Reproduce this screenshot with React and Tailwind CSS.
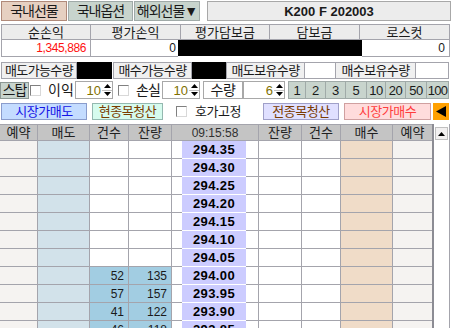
import React from "react";

const LINE = "border-[#a4a4ac]";

function Check({ className = "" }) {
  return (
    <div
      className={`w-[11px] h-[11px] shrink-0 bg-white border border-t-[#808080] border-l-[#808080] border-r-[#d8d8d8] border-b-[#d8d8d8] ${className}`}
    />
  );
}

function Spinner({ className, value }) {
  return (
    <div className={`flex h-[18px] bg-white border border-[#a8a8a8] ${className}`}>
      <div className="flex-1 flex items-center justify-end pr-[1px] text-[13px] leading-none text-[#807000]">
        {value}
      </div>
      <div className="w-[10px] flex flex-col">
        <div className="flex-1 flex items-center justify-center border-b border-[#c0c0c0]">
          <svg width="7" height="4" viewBox="0 0 7 4">
            <polygon points="3.5,0 7,4 0,4" fill="#000" />
          </svg>
        </div>
        <div className="flex-1 flex items-center justify-center">
          <svg width="7" height="4" viewBox="0 0 7 4">
            <polygon points="0,0 7,0 3.5,4" fill="#000" />
          </svg>
        </div>
      </div>
    </div>
  );
}

const prices = [
  "294.35",
  "294.30",
  "294.25",
  "294.20",
  "294.15",
  "294.10",
  "294.05",
  "294.00",
  "293.95",
  "293.90",
  "293.85",
];
const sellQty = {
  7: ["52", "135"],
  8: ["57", "157"],
  9: ["41", "122"],
  10: ["46", "118"],
};

export default function App() {
  return (
    <div className="w-[452px] h-[328px] overflow-hidden bg-white text-[#1a1a1a] font-['Liberation_Sans','Noto_Sans_CJK_KR',sans-serif] leading-none">
      {/* Row 1: tabs */}
      <div className="flex h-[21px] pt-[1px] pl-[1px]">
        <div className="w-[66px] h-[20px] flex items-center justify-center bg-[#e6d0c1] border border-[#b08a7a] text-[14px] tracking-[-1px]">
          국내선물
        </div>
        <div className="ml-[1px] w-[65px] h-[20px] flex items-center justify-center bg-[#c8d4cd] border border-[#a0aaa8] text-[14px] tracking-[-1px]">
          국내옵션
        </div>
        <div className="ml-[1px] w-[66px] h-[20px] flex items-center justify-center bg-[#c8d4cd] border border-[#a0aaa8] text-[14px] tracking-[-1px]">
          해외선물▼
        </div>
        <div className="ml-[7px] w-[244px] h-[20px] flex items-center justify-center bg-[#ececec] border border-[#a8a8a8] text-[13px] font-bold">
          K200 F 202003
        </div>
      </div>

      {/* Row 2: summary table */}
      <div className="mt-[3px] ml-[1px] w-[449px]">
        <div className={`flex h-[16px] border-t border-l ${LINE} bg-[#ececec] text-[13px]`}>
          <div className={`w-[89px] border-r border-b ${LINE} flex items-center justify-center`}>순손익</div>
          <div className={`w-[90px] border-r border-b ${LINE} flex items-center justify-center`}>평가손익</div>
          <div className={`w-[89px] border-r border-b ${LINE} flex items-center justify-center`}>평가담보금</div>
          <div className={`w-[90px] border-r border-b ${LINE} flex items-center justify-center`}>담보금</div>
          <div className={`w-[90px] border-r border-b ${LINE} flex items-center justify-center`}>로스컷</div>
        </div>
        <div className={`flex h-[17px] border-l ${LINE} text-[12px]`}>
          <div className={`w-[89px] border-r border-b ${LINE} flex items-center justify-end pr-[4px] text-[#ff1010] tracking-[-0.4px]`}>
            1,345,886
          </div>
          <div className={`w-[87px] border-b ${LINE} flex items-center justify-end pr-[2px]`}>0</div>
          <div className="w-[184px] bg-black mb-[1px]" />
          <div className={`w-[88px] border-r border-b ${LINE} flex items-center justify-end pr-[4px]`}>0</div>
        </div>
      </div>

      {/* Row 3: quantities */}
      <div className="mt-[5px] ml-[1px] flex h-[17px] text-[13px] tracking-[-0.6px]">
        <div className={`w-[76px] bg-[#f0f0f0] border ${LINE} flex items-center justify-center`}>매도가능수량</div>
        <div className="w-[35px] bg-black" />
        <div className={`ml-[1px] w-[79px] bg-[#f0f0f0] border ${LINE} flex items-center justify-center`}>매수가능수량</div>
        <div className="w-[34px] bg-black" />
        <div className={`w-[79px] bg-[#f0f0f0] border ${LINE} flex items-center justify-center`}>매도보유수량</div>
        <div className={`w-[31px] bg-white border-t border-b border-r ${LINE}`} />
        <div className={`w-[80px] bg-[#f0f0f0] border-t border-b border-r ${LINE} flex items-center justify-center`}>매수보유수량</div>
        <div className={`w-[33px] bg-white border-t border-b border-r ${LINE}`} />
      </div>

      {/* Row 4: stop controls */}
      <div className="mt-[2px] flex h-[18px] items-center text-[13px]">
        <div className="w-[29px] h-[17px] bg-[#c8d4cd] border border-[#8c9894] flex items-center justify-center text-[14px] tracking-[-1px]">스탑</div>
        <Check className="ml-[1px]" />
        <div className="ml-[7px] w-[27px] text-[14px]">이익</div>
        <Spinner className="w-[38px]" value="10" />
        <Check className="ml-[5px]" />
        <div className="ml-[7px] w-[26px] text-[14px] tracking-[-1px]">손실</div>
        <Spinner className="w-[38px]" value="10" />
        <div className="ml-[3px] w-[40px] h-[18px] bg-white border border-[#a8a8a8] flex items-center justify-center text-[14px] tracking-[-0.5px]">수량</div>
        <Spinner className="w-[42px]" value="6" />
        <div className="ml-[3px] flex h-[18px] text-[13px]">
          <div className="w-[18px] bg-[#c8d4cd] border border-[#a0aaa8] flex items-center justify-center">1</div>
          <div className="w-[20px] bg-[#c8d4cd] border border-l-0 border-[#a0aaa8] flex items-center justify-center">2</div>
          <div className="w-[20px] bg-[#c8d4cd] border border-l-0 border-[#a0aaa8] flex items-center justify-center">3</div>
          <div className="w-[21px] bg-[#c8d4cd] border border-l-0 border-[#a0aaa8] flex items-center justify-center">5</div>
          <div className="w-[19px] bg-[#c8d4cd] border border-l-0 border-[#a0aaa8] flex items-center justify-center tracking-[-0.5px]">10</div>
          <div className="w-[20px] bg-[#c8d4cd] border border-l-0 border-[#a0aaa8] flex items-center justify-center tracking-[-0.5px]">20</div>
          <div className="w-[21px] bg-[#c8d4cd] border border-l-0 border-[#a0aaa8] flex items-center justify-center tracking-[-0.5px]">50</div>
          <div className="w-[22px] bg-[#c8d4cd] border border-l-0 border-[#a0aaa8] flex items-center justify-center tracking-[-0.8px]">100</div>
        </div>
      </div>

      {/* Row 5: order buttons */}
      <div className="mt-[4px] flex h-[17px] items-center text-[13px] tracking-[-0.5px]">
        <div className="ml-[1px] w-[86px] h-[17px] bg-[#c4dcff] border border-[#8a9ccc] text-[#1414e6] flex items-center justify-center">
          시장가매도
        </div>
        <div className="ml-[5px] w-[71px] h-[17px] bg-[#d6fbee] border border-[#94b8b0] text-[#7a3c00] flex items-center justify-center">
          현종목청산
        </div>
        <Check className="ml-[13px]" />
        <div className="ml-[8px] w-[68px]">호가고정</div>
        <div className="w-[76px] h-[17px] bg-[#e0e0ff] border border-[#a0a0c8] text-[#7a3c00] flex items-center justify-center">
          전종목청산
        </div>
        <div className="ml-[5px] w-[87px] h-[17px] bg-[#ffdcdc] border border-[#d0a0a0] text-[#ff3c3c] flex items-center justify-center">
          시장가매수
        </div>
        <div className="ml-[2px] w-[16px] h-[17px] bg-[#ffa000] flex items-center justify-center">
          <svg width="10" height="11" viewBox="0 0 10 11">
            <polygon points="10,0 10,11 0,5.5" fill="#000" />
          </svg>
        </div>
      </div>

      {/* Table */}
      <div className="mt-[4px] flex">
        <div className="w-[434px] border-r-2 border-[#8c8c94]">
          <div className={`flex h-[17px] bg-[#c4c4c4] border-t ${LINE} text-[13px] text-[#202020]`}>
            <div className={`w-[38px] border-r border-b ${LINE} flex items-center justify-center`}>예약</div>
            <div className={`w-[52px] border-r border-b ${LINE} flex items-center justify-center`}>매도</div>
            <div className={`w-[39px] border-r border-b ${LINE} flex items-center justify-center`}>건수</div>
            <div className={`w-[43px] border-r border-b ${LINE} flex items-center justify-center`}>잔량</div>
            <div className={`w-[87px] border-r border-b ${LINE} flex items-center justify-center text-[12px] text-[#303030]`}>09:15:58</div>
            <div className={`w-[43px] border-r border-b ${LINE} flex items-center justify-center`}>잔량</div>
            <div className={`w-[39px] border-r border-b ${LINE} flex items-center justify-center`}>건수</div>
            <div className={`w-[52px] border-r border-b ${LINE} flex items-center justify-center`}>매수</div>
            <div className={`w-[39px] border-b ${LINE} flex items-center justify-center`}>예약</div>
          </div>
          {prices.map((p, i) => {
            const q = sellQty[i];
            const qBg = q ? "bg-[#a2cde2]" : "bg-white";
            return (
              <div key={p} className="flex h-[18px] text-[12px]">
                <div className={`w-[38px] bg-[#f5f3f1] border-r border-b ${LINE}`} />
                <div className={`w-[52px] bg-[#d2e2ea] border-r border-b ${LINE}`} />
                <div className={`w-[39px] ${qBg} border-r border-b ${LINE} flex items-center justify-end pr-[4px]`}>
                  {q ? q[0] : ""}
                </div>
                <div className={`w-[43px] ${qBg} border-r border-b ${LINE} flex items-center justify-end pr-[4px]`}>
                  {q ? q[1] : ""}
                </div>
                <div className="w-[87px] flex">
                  <div className={`w-[10px] bg-white border-b ${LINE}`} />
                  <div className="w-[64px] bg-[#ccccff] border-b border-white flex items-center justify-center text-[13px] font-bold tracking-[0.4px] text-black">
                    {p}
                  </div>
                  <div className={`w-[13px] bg-white border-r border-b ${LINE}`} />
                </div>
                <div className={`w-[43px] bg-white border-r border-b ${LINE}`} />
                <div className={`w-[39px] bg-white border-r border-b ${LINE}`} />
                <div className={`w-[52px] bg-[#f0dcc8] border-r border-b ${LINE}`} />
                <div className={`w-[39px] bg-[#f5f3f1] border-b ${LINE}`} />
              </div>
            );
          })}
        </div>
        <div className="w-[16px] border-r border-[#a4a4ac] flex flex-col">
          <div className="mt-[3px] ml-[1px] w-[13px] h-[13px] bg-[#f2f0f0] border border-[#c0c0c0] flex items-center justify-center">
            <svg width="7" height="4" viewBox="0 0 7 4">
              <polygon points="3.5,0 7,4 0,4" fill="#000" />
            </svg>
          </div>
        </div>
      </div>
    </div>
  );
}
